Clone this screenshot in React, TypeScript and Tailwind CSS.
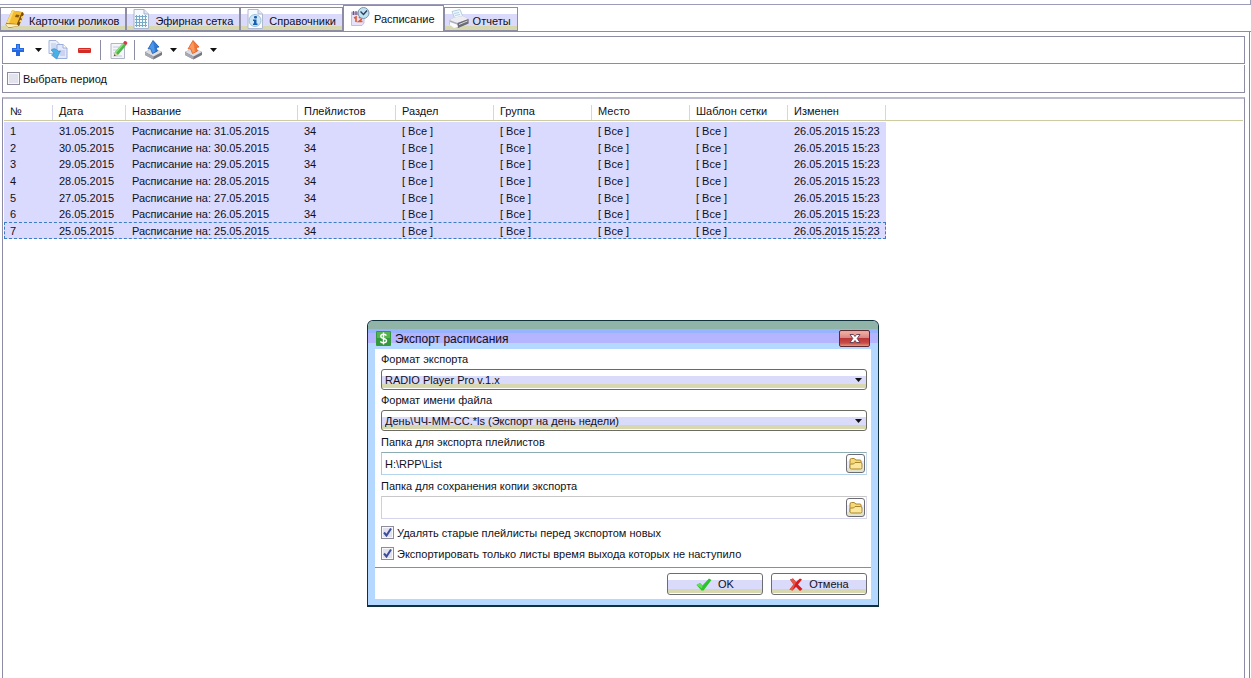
import type { ReactNode } from 'react';

interface Schedule {
  id: number;
  date: string;
}

const schedules: Schedule[] = [
  { id: 1, date: '31.05.2015' },
  { id: 2, date: '30.05.2015' },
  { id: 3, date: '29.05.2015' },
  { id: 4, date: '28.05.2015' },
  { id: 5, date: '27.05.2015' },
  { id: 6, date: '26.05.2015' },
  { id: 7, date: '25.05.2015' },
];

const columns = [
  { label: '№', width: 'w-[49px]' },
  { label: 'Дата', width: 'w-[73px]' },
  { label: 'Название', width: 'w-[172px]' },
  { label: 'Плейлистов', width: 'w-[98px]' },
  { label: 'Раздел', width: 'w-[98px]' },
  { label: 'Группа', width: 'w-[98px]' },
  { label: 'Место', width: 'w-[98px]' },
  { label: 'Шаблон сетки', width: 'w-[98px]' },
  { label: 'Изменен', width: 'w-[98px]' },
];

/* ---------- icons ---------- */

function BookIcon() {
  return (
    <svg width="20" height="20" viewBox="0 0 20 20">
      <path d="M7 1.500 L17 3 Q19 3.500 18.500 5.500 L14 17 L4 19 L.5 16 Z" fill="#a8700c" />
      <path d="M1 15 L12 15.500 L13.500 17 L4.500 18.300 Q1.500 18 1 15Z" fill="#fff0b8" />
      <path d="M7 1.500 L17 3 L12 15 L1.500 14 Z" fill="#f4bc30" />
      <path d="M7 1.500 L9 1.800 L4 14.200 L1.500 14 Z" fill="#fbdc7c" />
      <path d="M11 5.500 L14.500 6 L13.500 8.500 L10 8 Z" fill="#8a5a10" />
      <path d="M17 3 Q19 3.500 18.500 5.500 L14 17 L12 15 Z" fill="#7c500c" />
      <path d="M17.500 7 L16.500 9.500 M15.800 11 L15 13" stroke="#f8d870" strokeWidth="1.600" />
    </svg>
  );
}

function GridPageIcon() {
  return (
    <svg width="18" height="20" viewBox="0 0 18 20">
      <path d="M2 .5 H12 L16.500 5 V19.500 H2 Z" fill="#f5faff" stroke="#a8b4cc" />
      <path d="M12 .5 V5 H16.500" fill="#dfe8f4" stroke="#a8b4cc" />
      <path d="M3 7.500 H15 M3 10.500 H15 M3 13.500 H15 M3 16.500 H15 M4.500 6 V18 M7.500 6 V18 M10.500 6 V18 M13.500 6 V18" stroke="#78aac8" />
    </svg>
  );
}

function InfoPageIcon() {
  return (
    <svg width="18" height="20" viewBox="0 0 18 20">
      <path d="M2 .5 H12 L16.500 5 V19.500 H2 Z" fill="#f8fbff" stroke="#b0b8cc" />
      <path d="M12 .5 V5 H16.500" fill="#dfe8f4" stroke="#b0b8cc" />
      <circle cx="9" cy="11.500" r="6" fill="#cfe6f6" stroke="#9cc0dc" />
      <rect x="8" y="7" width="3" height="2.500" rx="1" fill="#1560b0" />
      <path d="M7 10.500 H10.500 V14.500 H11.500 V16 H7 V14.500 H8 V12 H7 Z" fill="#1560b0" />
    </svg>
  );
}

function CalendarClockIcon() {
  return (
    <svg width="20" height="20" viewBox="0 0 20 20">
      <path d="M1.500 5 H14 V16 L12 18.500 H1.500 Z" fill="#e6e2fa" stroke="#c4bce0" />
      <path d="M2 5 H10 V8 H2 Z" fill="#b0a4c4" />
      <path d="M3.500 4 V8 M6 4 V8 M8.500 4 V8" stroke="#6c5c74" />
      <path d="M4 11 L6 10 V15 M9 11 Q10.500 9.500 11.500 11 Q12 12.500 9 14.500 H12.500" fill="none" stroke="#e0582c" strokeWidth="1.600" />
      <circle cx="13.500" cy="6" r="5.500" fill="#bfe2f0" stroke="#7d93ac" />
      <path d="M10.500 4.500 L13.500 7.500 L17 3.500" fill="none" stroke="#2c3e58" strokeWidth="1.400" />
    </svg>
  );
}

function PrinterIcon() {
  return (
    <svg width="20" height="20" viewBox="0 0 20 20">
      <path d="M3 2.500 L11 .5 L14 8 L6 10 Z" fill="#edf7ff" stroke="#b4cce0" />
      <path d="M5 4.500 L10 3.500 M6 6.500 L11 5.500" stroke="#b8d0e6" />
      <path d="M.5 11 L5 8.500 L14 7 L19.500 10 V14.500 L9 19 L.5 15.500 Z" fill="#b0b0bc" />
      <path d="M.5 11 L5 8.500 L14 7 L19.500 10 L8.500 14 Z" fill="#ececf2" />
      <path d="M8.500 14 L19.500 10 V14.500 L9 19 Z" fill="#6c6c78" />
      <path d="M1 13 L8 15.500 L9 18 L5 19 L1 16 Z" fill="#fafaff" />
      <path d="M10 15.500 L18.500 12" stroke="#d8d8e0" />
    </svg>
  );
}

function PlusIcon() {
  return (
    <svg width="14" height="14" viewBox="0 0 14 14">
      <path d="M5 1 H9 V5 H13 V9 H9 V13 H5 V9 H1 V5 H5 Z" fill="#2468e0" />
      <path d="M6 2 H8 V6 H12 V7 H2 V6 H6 Z" fill="#4a8cf6" />
    </svg>
  );
}

function CopyIcon() {
  return (
    <svg width="20" height="20" viewBox="0 0 20 20">
      <path d="M1 .5 H8 L11 3.500 V13.500 H1 Z" fill="#eaf0ff" stroke="#a4b4dc" />
      <path d="M3 4 H8 M3 6 H9 M3 8 H9" stroke="#b4c4e8" />
      <path d="M9 4.500 H15 L19 8 V18.500 H9 Z" fill="#e4e8fc" stroke="#9caedc" />
      <path d="M15 4.500 V8 H19" fill="#fff" stroke="#9caedc" />
      <path d="M12 11 H17 M12 13 H17 M12 15 H17" stroke="#b4bee4" />
      <path d="M3 10 Q7 7 10 11 L12.500 11 L8.500 19 L3.500 15 L6 14 Q5.500 12 3 10Z" fill="#4ab0e6" stroke="#2c88c8" strokeWidth=".6" />
    </svg>
  );
}

function MinusIcon() {
  return (
    <svg width="13" height="5" viewBox="0 0 13 5">
      <rect width="13" height="5" rx="1" fill="#d42c24" />
      <rect x="1" y="1" width="11" height="1" fill="#f07c6c" />
    </svg>
  );
}

function EditIcon() {
  return (
    <svg width="18" height="20" viewBox="0 0 18 20">
      <path d="M1 3.500 H14.500 V18.500 H1 Z" fill="#f5f6fc" stroke="#b0b4c4" />
      <path d="M3 7 H9 M3 10 H7 M3 13 H6 M3 16 H12" stroke="#c4c8d8" />
      <path d="M4 16 L5 12 L13 3 L16 5.500 L8 15 Z" fill="#48b848" />
      <path d="M5 12 L13 3 L14.200 4 L6.200 13 Z" fill="#92de80" />
      <path d="M13 3 L14.500 1 Q16.500 .5 17.500 3 L16 5.500 Z" fill="#d8384a" />
      <path d="M4 16 L5 12 L8 15 Z" fill="#e8d0a0" />
      <path d="M4 16 L4.500 14.200 L5.800 15.500 Z" fill="#333" />
    </svg>
  );
}

function DriveArrowIcon({ light, dark }: { light: string; dark: string }) {
  return (
    <svg width="19" height="20" viewBox="0 0 19 20">
      <path d="M1 12 L9 8 L18 12 V15 L9.500 19.500 L1 15 Z" fill="#77777f" />
      <path d="M1 12 L9 8 L18 12 L9.500 16.500 Z" fill="#dcdce2" />
      <path d="M1 12 L9.500 16.500 V19.500 L1 15 Z" fill="#a8a8b2" />
      <path d="M9 .5 L15 7 L12 7.500 L13.500 11 L8.500 13.500 L6.500 8.500 L4 9 Z" fill={light} stroke={dark} strokeWidth=".8" />
      <path d="M9 .5 L15 7 L12 7.500 L13.500 11 L11 12 Z" fill={dark} fillOpacity=".5" />
    </svg>
  );
}

function Caret() {
  return (
    <svg width="7" height="4" viewBox="0 0 7 4">
      <path d="M0 0 H7 L3.500 4 Z" fill="#111" />
    </svg>
  );
}

function FolderIcon() {
  return (
    <svg width="14" height="13" viewBox="0 0 14 13">
      <path d="M1 11 V3 Q1 1.500 2.500 1.500 H5 L7 3 H11 Q12 3 12 4 V6" fill="#f6d878" stroke="#a8862c" />
      <path d="M1 11 Q1 12 2.500 12 H11.500 Q13 12 13 10.500 V7 Q13 5.500 11.500 5.500 H6 L4.500 7 H2 Q1 7 1 8.500Z" fill="#fbe79c" stroke="#a8862c" />
    </svg>
  );
}

function DollarIcon() {
  return (
    <svg width="15" height="15" viewBox="0 0 15 15">
      <rect width="15" height="15" rx="1" fill="#34983c" />
      <rect x="1" y="1" width="13" height="6" fill="#54b450" />
      <path d="M10.500 4.500 Q9 3.200 7.500 3.200 Q4.800 3.200 4.800 5.200 Q4.800 6.800 7.500 7.400 Q10.500 8 10.500 9.800 Q10.500 11.800 7.500 11.800 Q5.500 11.800 4.300 10.500 M7.500 1.500 V13.500" fill="none" stroke="#fff" strokeWidth="1.400" />
    </svg>
  );
}

function CloseIcon() {
  return (
    <svg width="12" height="9" viewBox="0 0 12 9">
      <path d="M1 .5 H4.500 L6 2.500 L7.500 .5 H11 L8.200 4.500 L11 8.500 H7.500 L6 6.500 L4.500 8.500 H1 L3.800 4.500 Z" fill="#fff" stroke="#5a3c50" strokeWidth=".9" />
    </svg>
  );
}

function OkIcon() {
  return (
    <svg width="16" height="13" viewBox="0 0 16 13">
      <path d="M.5 7 L4 5 L6.500 7.500 L13 .5 L15.500 2 L7.500 12.500 H5.500 Z" fill="#2cc42c" />
      <path d="M.5 7 L4 5 L6.500 7.500 L6 10.500 Z" fill="#66dc5c" />
    </svg>
  );
}

function CancelIcon() {
  return (
    <svg width="14" height="13" viewBox="0 0 14 13">
      <path d="M1 1.500 L4 .5 L7 4 L11 .5 L13 1.500 L9 6.500 L13.500 11 L11 13 L7 9 L3.500 12.500 L.5 11.500 L4.500 6.500 Z" fill="#d81c1c" />
      <path d="M1 1.500 L4 .5 L7 4 L6 6.500 L3.500 12.500 L.5 11.500 L4.500 6.500 Z" fill="#e25848" />
    </svg>
  );
}

/* ---------- controls ---------- */

function Tab({ icon, label, active }: { icon: ReactNode; label: string; active?: boolean }) {
  return (
    <button
      type="button"
      className={
        active
          ? 'flex h-[26px] items-center gap-1 border border-b-0 border-[#8c8ca4] bg-white pr-2 pl-1.5 whitespace-nowrap'
          : 'flex h-6 items-center gap-1 border border-[#8c8ca4] bg-[linear-gradient(#fff_6px,#dadafa_6px,#dadafa_18px,#d8d8b0_18px)] pr-1.5 pl-1 whitespace-nowrap'
      }
    >
      <span className={active ? 'flex w-5 justify-center pb-1' : 'flex w-5 justify-center'}>{icon}</span>
      <span className={active ? '' : 'pt-[3px]'}>{label}</span>
    </button>
  );
}

function ToolButton({ label, children }: { label: string; children: ReactNode }) {
  return (
    <button type="button" aria-label={label} className="flex h-5 w-5 items-center justify-center">
      {children}
    </button>
  );
}

function CheckBox({ label, defaultChecked }: { label: string; defaultChecked?: boolean }) {
  return (
    <label className="flex h-[21px] items-center gap-[3px] whitespace-nowrap">
      <span className="grid">
        <input
          type="checkbox"
          defaultChecked={defaultChecked}
          className="peer col-start-1 row-start-1 h-[13px] w-[13px] appearance-none border border-[#8c8c9c] bg-[#e2e2ee] shadow-[inset_0_0_0_1px_#f8f8f8]"
        />
        <svg
          width="13"
          height="13"
          viewBox="0 0 13 13"
          className="pointer-events-none invisible col-start-1 row-start-1 peer-checked:visible"
        >
          <path d="M3 6.500 L5.500 9.500 L10 2.500" fill="none" stroke="#3c4c9c" strokeWidth="2" />
        </svg>
      </span>
      {label}
    </label>
  );
}

function SelectField({ id, label, value }: { id: string; label: string; value: string }) {
  return (
    <div>
      <label htmlFor={id} className="flex h-5 items-center">
        {label}
      </label>
      <div className="relative">
        <select
          id={id}
          className="block h-[21px] w-full appearance-none rounded-[3px] border border-[#6c6c64] bg-[linear-gradient(#fff_6px,#dadafa_6px,#dadafa_14px,#d8d8b0_14px,#d8d8b0_18px,#fff_18px)] px-[3px]"
        >
          <option>{value}</option>
        </select>
        <span className="pointer-events-none absolute top-[9px] right-[5px]">
          <Caret />
        </span>
      </div>
    </div>
  );
}

function FolderField({ id, label, value, border }: { id: string; label: string; value: string; border: string }) {
  return (
    <div>
      <label htmlFor={id} className="flex h-[21px] items-center">
        {label}
      </label>
      <div className={`flex h-[23px] items-center border pr-px ${border}`}>
        <input id={id} defaultValue={value} className="min-w-0 flex-1 px-[3px] outline-none" />
        <button
          type="button"
          aria-label="Обзор"
          className="flex h-[19px] w-[19px] items-center justify-center rounded-[3px] border border-[#6c6c74] bg-[linear-gradient(#fff_6px,#ececfa_6px,#ececfa_13px,#e4e4cc_13px)]"
        >
          <FolderIcon />
        </button>
      </div>
    </div>
  );
}

function DialogButton({ icon, label }: { icon: ReactNode; label: string }) {
  return (
    <button
      type="button"
      className="flex h-[22px] w-24 items-center justify-center gap-1.5 rounded-[3px] border border-[#6c6c74] bg-[linear-gradient(#fff_6px,#dadafa_6px,#dadafa_15px,#d8d8b0_15px,#d8d8b0_19px,#fff_19px)]"
    >
      {icon}
      {label}
    </button>
  );
}

function ExportDialog() {
  return (
    <div
      role="dialog"
      aria-label="Экспорт расписания"
      className="absolute top-[320px] left-[367px] w-[512px] rounded-t-md border border-b-2 border-[#10303c] bg-[#b4d8ff]"
    >
      <div className="flex h-7 items-center rounded-t-[5px] bg-[linear-gradient(#90b4a8_8px,#98b4ff_8px,#98b4ff_12px,#b4b4ff_12px,#b4b4ff_22px,#b4d8ff_22px)] pt-1.5 pr-2 pl-2">
        <DollarIcon />
        <h2 className="flex-1 pt-px pl-1 text-[12px]">Экспорт расписания</h2>
        <button
          type="button"
          aria-label="Закрыть"
          className="flex h-[17px] w-[31px] items-center justify-center rounded-[2px] border border-[#5c2c34] bg-[linear-gradient(#eca89c_2px,#d88480_7px,#b83434_7px,#c84c48_12px,#e09c78)]"
        >
          <CloseIcon />
        </button>
      </div>

      <div className="mx-[7px] mb-1.5 bg-white">
        <div className="pr-1 pb-[3px] pl-1.5">
          <SelectField id="format" label="Формат экспорта" value="RADIO Player Pro v.1.x" />
          <SelectField id="filename" label="Формат имени файла" value="День\ЧЧ-ММ-СС.*ls (Экспорт на день недели)" />
          <FolderField
            id="folder"
            label="Папка для экспорта плейлистов"
            value="H:\RPP\List"
            border="border-t-[#8cacb4] border-r-[#c8dcec] border-b-[#b4d4ec] border-l-[#b4c8d8]"
          />
          <FolderField
            id="copy-folder"
            label="Папка для сохранения копии экспорта"
            value=""
            border="border-t-[#c8c8c8] border-r-[#dcdcec] border-b-[#d4d4ec] border-l-[#d0d0dc]"
          />
          <div className="pt-[3px]">
            <CheckBox label="Удалять старые плейлисты перед экспортом новых" defaultChecked />
            <CheckBox label="Экспортировать только листы время выхода которых не наступило" defaultChecked />
          </div>
        </div>
        <div className="flex justify-end gap-2 border-t border-[#8c8ca0] pt-[5px] pr-1 pb-1">
          <DialogButton icon={<OkIcon />} label="OK" />
          <DialogButton icon={<CancelIcon />} label="Отмена" />
        </div>
      </div>
    </div>
  );
}

export default function App() {
  return (
    <div className="relative flex h-screen flex-col overflow-hidden bg-white font-['Liberation_Sans','Noto_Sans',sans-serif] text-[11px] leading-4 text-[#101020]">
      <div className="h-[5px] border-r border-b border-[#9c9cb8]" />

      <nav className="flex h-[27px] items-end border-b border-[#8c8ca4]">
        <Tab icon={<BookIcon />} label="Карточки роликов" />
        <Tab icon={<GridPageIcon />} label="Эфирная сетка" />
        <Tab icon={<InfoPageIcon />} label="Справочники" />
        <Tab icon={<CalendarClockIcon />} label="Расписание" active />
        <Tab icon={<PrinterIcon />} label="Отчеты" />
      </nav>

      <main className="mr-px flex min-h-0 flex-1 flex-col border-r border-[#8484a0] pt-1 pr-1 pl-0.5">
        <div className="flex h-7 shrink-0 items-center border border-[#8c8ca4] pl-[5px]">
          <ToolButton label="Добавить">
            <PlusIcon />
          </ToolButton>
          <button type="button" aria-label="Варианты добавления" className="flex w-5 justify-center">
            <Caret />
          </button>
          <ToolButton label="Копировать">
            <CopyIcon />
          </ToolButton>
          <span className="w-1.5" />
          <ToolButton label="Удалить">
            <MinusIcon />
          </ToolButton>
          <span className="mx-1.5 h-5 border-l border-[#8c8ca4]" />
          <span className="w-0.5" />
          <ToolButton label="Изменить">
            <EditIcon />
          </ToolButton>
          <span className="mr-2 ml-[5px] h-5 border-l border-[#8c8ca4]" />
          <ToolButton label="Экспорт">
            <DriveArrowIcon light="#4a98ec" dark="#1c5cb4" />
          </ToolButton>
          <button type="button" aria-label="Варианты экспорта" className="flex w-5 justify-center">
            <Caret />
          </button>
          <ToolButton label="Импорт">
            <DriveArrowIcon light="#fc9858" dark="#e05c20" />
          </ToolButton>
          <button type="button" aria-label="Варианты импорта" className="flex w-5 justify-center">
            <Caret />
          </button>
        </div>

        <div className="mt-px flex h-7 shrink-0 items-center border border-t-0 border-[#8c8ca4] pl-1">
          <CheckBox label="Выбрать период" />
        </div>

        <div className="mt-1 flex-1 border-x border-t-2 border-[#8c8ca4] border-t-[#bcbccc] px-px">
          <div className="relative">
            <div className="absolute inset-x-0 top-[21px] border-t border-[#cccca0]" />
            <table className="table-fixed border-collapse">
              <thead>
                <tr className="h-[23px]">
                  {columns.map((column) => (
                    <th key={column.label} className={`p-0 text-left align-top font-normal whitespace-nowrap ${column.width}`}>
                      <div className="mt-1.5 h-[15px] border-r border-[#d4d4ec] pl-1.5 leading-3">{column.label}</div>
                    </th>
                  ))}
                </tr>
              </thead>
              <tbody className="bg-[#dadaff]">
                {schedules.map((s) => (
                  <tr
                    key={s.id}
                    className="h-[17px] leading-4 whitespace-nowrap last:outline last:-outline-offset-1 last:outline-dashed last:outline-[#3c7cc4] nth-[3n]:h-4"
                  >
                    <td className="p-0 pl-1.5">{s.id}</td>
                    <td className="p-0 pl-1.5">{s.date}</td>
                    <td className="p-0 pl-1.5">Расписание на: {s.date}</td>
                    <td className="p-0 pl-1.5">34</td>
                    <td className="p-0 pl-1.5">[ Все ]</td>
                    <td className="p-0 pl-1.5">[ Все ]</td>
                    <td className="p-0 pl-1.5">[ Все ]</td>
                    <td className="p-0 pl-1.5">[ Все ]</td>
                    <td className="p-0 pl-1.5">26.05.2015 15:23</td>
                  </tr>
                ))}
              </tbody>
            </table>
          </div>
        </div>
      </main>

      <ExportDialog />
    </div>
  );
}
